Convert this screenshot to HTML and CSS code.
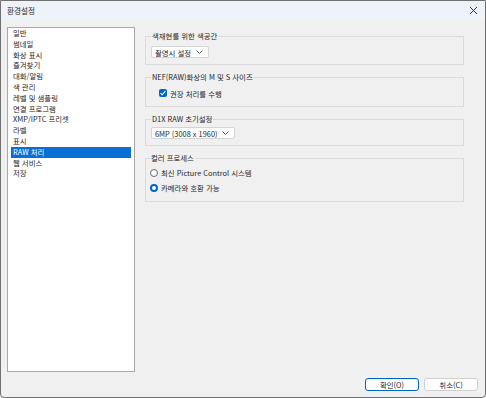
FILE: index.html
```html
<!DOCTYPE html>
<html lang="ko">
<head>
  <meta charset="UTF-8">
  <title>환경설정</title>
  <link rel="stylesheet" href="styles.css">
</head>
<body>
  <div class="window">
    <div class="titlebar">
      <span class="title">환경설정</span>
      <svg class="close" width="9" height="9" viewBox="0 0 9 9"><path d="M1 1L8 8M8 1L1 8" stroke="#333" stroke-width="1" fill="none"/></svg>
    </div>
    <div class="main">
      <ul class="sidebar">
        <li>일반</li>
        <li>썸네일</li>
        <li>화상 표시</li>
        <li>즐겨찾기</li>
        <li>대화/알림</li>
        <li>색 관리</li>
        <li>레벨 및 샘플링</li>
        <li>연결 프로그램</li>
        <li>XMP/IPTC 프리셋</li>
        <li>라벨</li>
        <li>표시</li>
        <li class="selected">RAW 처리</li>
        <li>웹 서비스</li>
        <li>저장</li>
      </ul>
      <div class="panel">
        <fieldset class="group">
          <legend>색재현를 위한 색공간</legend>
          <div class="select select-short">
            <span>촬영시 설정</span>
            <svg width="7" height="4" viewBox="0 0 7 4"><path d="M0.5 0.5L3.5 3.5L6.5 0.5" stroke="#555" fill="none"/></svg>
          </div>
        </fieldset>
        <fieldset class="group">
          <legend>NEF(RAW)화상의 M 및 S 사이즈</legend>
          <label class="check-row">
            <span class="checkbox">
              <svg width="8" height="8" viewBox="0 0 8 8"><path d="M1.6 4.2L3.2 5.8L6.4 2.2" stroke="#fff" stroke-width="1.1" fill="none"/></svg>
            </span>
            권장 처리를 수행
          </label>
        </fieldset>
        <fieldset class="group">
          <legend>D1X RAW 초기설정</legend>
          <div class="select select-long">
            <span>6MP (3008 x 1960)</span>
            <svg width="7" height="4" viewBox="0 0 7 4"><path d="M0.5 0.5L3.5 3.5L6.5 0.5" stroke="#555" fill="none"/></svg>
          </div>
        </fieldset>
        <fieldset class="group group-radios">
          <legend>컬러 프로세스</legend>
          <label class="radio-row"><span class="radio"></span>최신 Picture Control 시스템</label>
          <label class="radio-row"><span class="radio checked"></span>카메라와 호환 가능</label>
        </fieldset>
      </div>
    </div>
    <div class="footer">
      <button class="btn btn-default">확인(O)</button>
      <button class="btn">취소(C)</button>
    </div>
  </div>
</body>
</html>
```

FILE: styles.css
```css
:root {
  --bg: #f0f0f0;
  --accent: #0067c0;
  --line: #dadada;
  --text: #262626;
}
html, body {
  margin: 0;
  padding: 0;
  background: var(--bg);
}
body {
  font-family: "Noto Sans CJK KR", "Noto Sans", sans-serif;
  font-size: 7.4px;
  color: var(--text);
}
.window {
  width: 486px;
  height: 398px;
  box-sizing: border-box;
  border: 1px solid #707070;
  border-bottom-left-radius: 4px;
  border-bottom-right-radius: 4px;
  display: flex;
  flex-direction: column;
  background: var(--bg);
}
.titlebar {
  height: 19px;
  flex-shrink: 0;
  background: #eef3fa;
  display: flex;
  align-items: center;
  justify-content: space-between;
  padding: 0 7px 0 6px;
}
.title {
  font-size: 7.6px;
}
.main {
  flex: 1;
  display: flex;
  gap: 10px;
  padding: 7px 21px 0 6px;
}
.sidebar {
  list-style: none;
  margin: 0;
  width: 128px;
  height: 345px;
  box-sizing: border-box;
  border: 1px solid #a9a9a9;
  background: #fff;
  padding: 0;
}
.sidebar li {
  height: 10.8px;
  line-height: 10.8px;
  margin: 0 3px;
  padding-left: 2px;
  white-space: nowrap;
}
.sidebar li.selected {
  background: #0a6fd4;
  color: #fff;
}
.panel {
  flex: 1;
  display: flex;
  flex-direction: column;
  gap: 6px;
  padding-top: 3px;
}
.group {
  margin: 0;
  min-width: 0;
  border: 1px solid var(--line);
  padding: 0 5px 6px 5px;
}
.group legend {
  padding: 0 1px;
  line-height: 12px;
  white-space: nowrap;
}
.select {
  margin-top: 4px;
  height: 12px;
  box-sizing: border-box;
  background: #fff;
  border: 1px solid #d4d4d4;
  border-radius: 2px;
  display: flex;
  align-items: center;
  justify-content: space-between;
  padding: 0 5px 0 3px;
  white-space: nowrap;
}
.select-short { width: 58px; }
.select-long { width: 84px; margin-top: 2px; }
.check-row {
  display: flex;
  align-items: center;
  gap: 3px;
  height: 12px;
  margin: 4px 0 1px 8px;
  white-space: nowrap;
}
.checkbox {
  width: 8px;
  height: 8px;
  border-radius: 2px;
  background: var(--accent);
  display: flex;
}
.group-radios {
  padding-left: 4px;
}
.radio-row {
  display: flex;
  align-items: center;
  gap: 3px;
  height: 15px;
  white-space: nowrap;
}
.radio-row:first-of-type {
  margin-top: 1px;
}
.radio {
  width: 8px;
  height: 8px;
  box-sizing: border-box;
  border: 1px solid #6a6a6a;
  border-radius: 50%;
  background: #fff;
}
.radio.checked {
  border: 2.5px solid var(--accent);
  background: #fff;
}
.footer {
  display: flex;
  justify-content: flex-end;
  gap: 5px;
  padding: 6px 7px 6px 0;
}
.btn {
  width: 54px;
  height: 13px;
  font-family: inherit;
  font-size: 7.4px;
  line-height: 1;
  padding: 0;
  color: var(--text);
  background: #fdfdfd;
  border: 1px solid #d0d0d0;
  border-radius: 3px;
}
.btn-default {
  border-color: var(--accent);
}
```
